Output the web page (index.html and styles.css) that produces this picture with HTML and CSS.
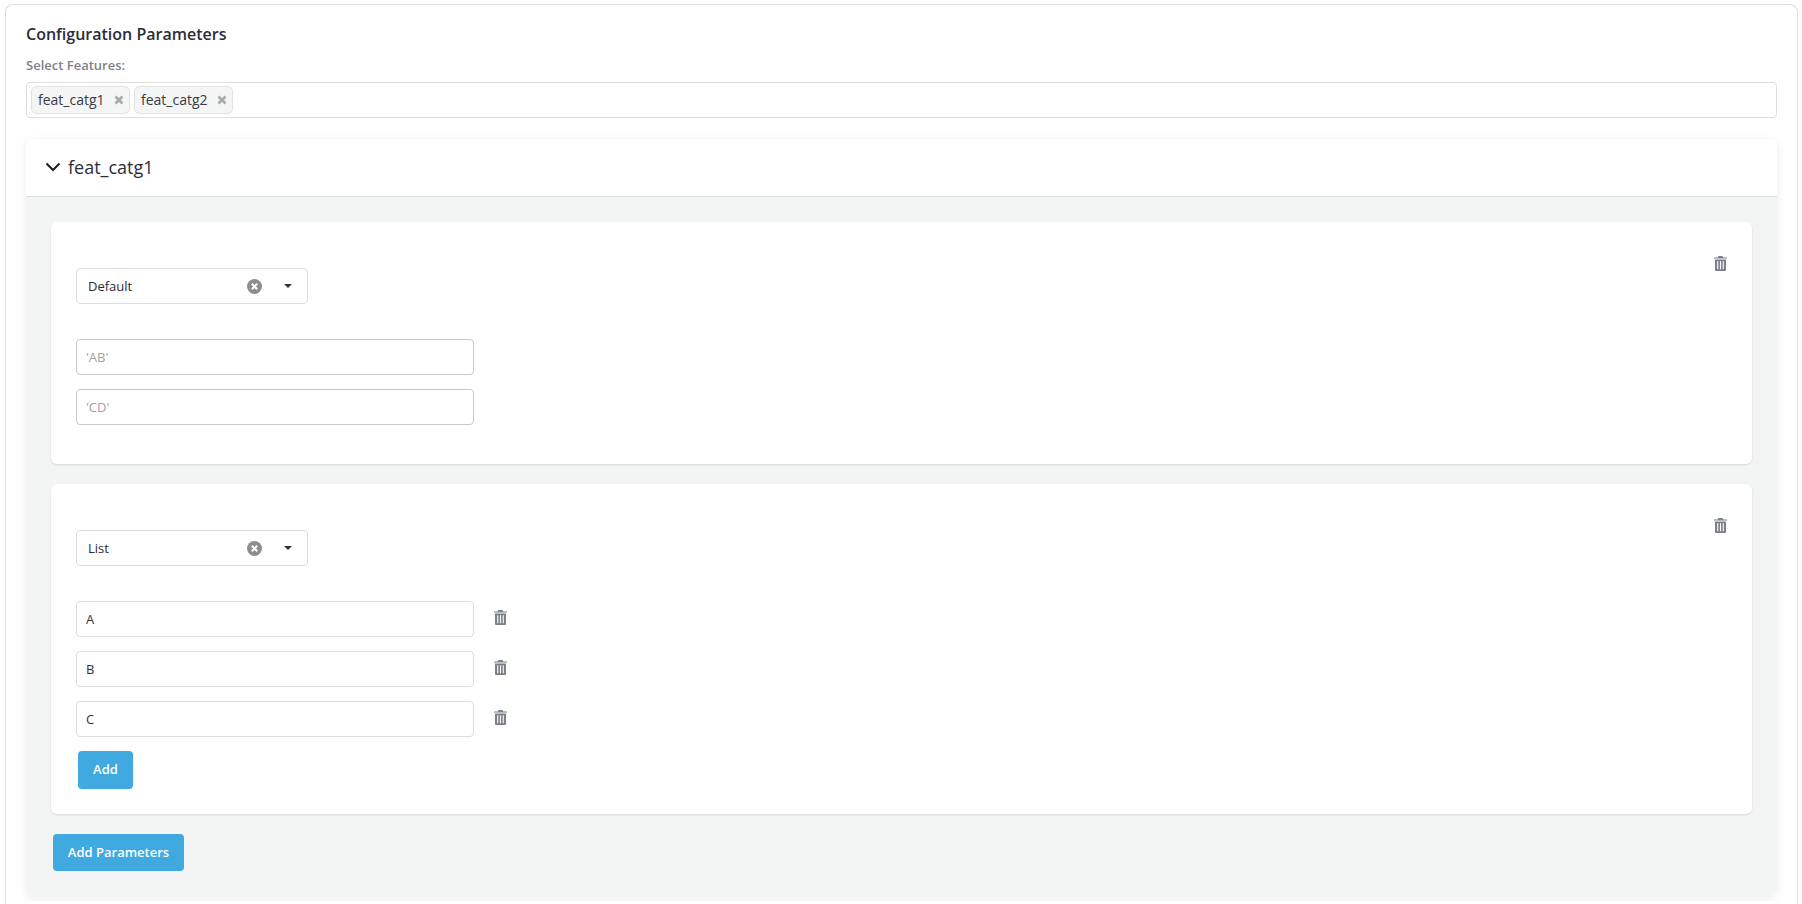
FILE: index.html
```html
<!DOCTYPE html>
<html lang="en">
<head>
    <meta charset="UTF-8">
    <meta name="viewport" content="width=device-width, initial-scale=1.0">
    <title>Configuration Parameters</title>
    <link rel="stylesheet" href="styles.css">
</head>
<body>
    <svg class="icon-defs" width="0" height="0">
        <symbol id="trash" viewBox="0 0 13 15">
            <path fill="currentColor" fill-rule="evenodd" d="M4.5 0h4l.8 1.4H13v1.2H0V1.4h3.7zM1 3.4h11V14a1 1 0 0 1-1 1H2a1 1 0 0 1-1-1zM3.2 5.2v8h1.1v-8zM5.95 5.2v8h1.1v-8zM8.7 5.2v8h1.1v-8z"/>
        </symbol>
        <symbol id="chip-x" viewBox="0 0 10 10">
            <path d="M1.5 1.5l7 7M8.5 1.5l-7 7" fill="none" stroke="currentColor" stroke-width="2.6"/>
        </symbol>
    </svg>
    <div class="page-card">
        <h2 class="page-title">Configuration Parameters</h2>
        <label class="field-label">Select Features:</label>
        <div class="multi-select">
            <span class="chip">feat_catg1 <svg class="chip-x" width="10" height="10"><use href="#chip-x"/></svg></span>
            <span class="chip">feat_catg2 <svg class="chip-x" width="10" height="10"><use href="#chip-x"/></svg></span>
        </div>

        <div class="accordion">
            <div class="accordion-head">
                <svg class="chevron" viewBox="0 0 16 10" width="16" height="10"><path d="M1.5 1.5 8 8l6.5-6.5" fill="none" stroke="currentColor" stroke-width="2"/></svg>
                <span>feat_catg1</span>
            </div>
            <div class="accordion-body">
                <div class="param-card">
                    <button class="icon-btn card-trash" type="button"><svg width="13" height="15"><use href="#trash"/></svg></button>
                    <div class="type-select">
                        <span class="type-value">Default</span>
                        <svg class="clear-icon" viewBox="0 0 15 15" width="15" height="15"><circle cx="7.5" cy="7.5" r="7.5" fill="#8e8e8e"/><path d="M4.8 4.8l5.4 5.4M10.2 4.8l-5.4 5.4" stroke="#fff" stroke-width="2"/></svg>
                        <span class="caret"></span>
                    </div>
                    <div class="value-list">
                        <div class="value-row"><input class="value-input" type="text" placeholder="'AB'"></div>
                        <div class="value-row"><input class="value-input" type="text" placeholder="'CD'"></div>
                    </div>
                </div>

                <div class="param-card">
                    <button class="icon-btn card-trash" type="button"><svg width="13" height="15"><use href="#trash"/></svg></button>
                    <div class="type-select">
                        <span class="type-value">List</span>
                        <svg class="clear-icon" viewBox="0 0 15 15" width="15" height="15"><circle cx="7.5" cy="7.5" r="7.5" fill="#8e8e8e"/><path d="M4.8 4.8l5.4 5.4M10.2 4.8l-5.4 5.4" stroke="#fff" stroke-width="2"/></svg>
                        <span class="caret"></span>
                    </div>
                    <div class="value-list">
                        <div class="value-row">
                            <input class="value-input filled" type="text" value="A">
                            <button class="icon-btn" type="button"><svg width="13" height="15"><use href="#trash"/></svg></button>
                        </div>
                        <div class="value-row">
                            <input class="value-input filled" type="text" value="B">
                            <button class="icon-btn" type="button"><svg width="13" height="15"><use href="#trash"/></svg></button>
                        </div>
                        <div class="value-row">
                            <input class="value-input filled" type="text" value="C">
                            <button class="icon-btn" type="button"><svg width="13" height="15"><use href="#trash"/></svg></button>
                        </div>
                    </div>
                    <button class="button add-btn" type="button">Add</button>
                </div>

                <button class="button add-params" type="button">Add Parameters</button>
            </div>
        </div>

        <div class="accordion next-accordion">
            <div class="accordion-head"></div>
        </div>
    </div>
</body>
</html>
```

FILE: styles.css
```css
html, body {
    height: 904px;
    overflow: hidden;
}

body {
    margin: 0;
    background-color: #fff;
    font-family: "Open Sans", sans-serif;
    color: #2b2b33;
}

.icon-defs {
    position: absolute;
}

.page-card {
    height: 900px;
    box-sizing: border-box;
    margin: 4px 4px 0 5px;
    padding: 17px 20px 0 20px;
    border: 1px solid #ddd;
    border-bottom: none;
    border-radius: 8px 8px 0 0;
    overflow: hidden;
}

.page-title {
    margin: 0;
    font-size: 16px;
    font-weight: 600;
    line-height: 24px;
    color: #2b2d3b;
}

.field-label {
    display: block;
    margin-top: 10px;
    font-size: 13px;
    font-weight: 600;
    line-height: 18px;
    color: #7f8287;
}

.multi-select {
    display: flex;
    align-items: center;
    gap: 4px;
    margin-top: 8px;
    height: 36px;
    box-sizing: border-box;
    padding: 0 4px;
    border: 1px solid #ddd;
    border-radius: 4px;
}

.chip {
    display: flex;
    align-items: center;
    justify-content: space-between;
    width: 99px;
    height: 28px;
    box-sizing: border-box;
    padding: 0 5px 1px 6px;
    background-color: #f4f5f5;
    border: 1px solid #e2e2e2;
    border-radius: 5px;
    font-size: 14px;
    color: #3a3a44;
}

.chip-x {
    color: #a9a9a9;
}

.accordion {
    margin-top: 21px;
    border-radius: 6px;
    box-shadow: 0 2px 10px rgba(0, 0, 0, 0.08);
}

.next-accordion {
    margin-top: 6px;
}

.next-accordion .accordion-head {
    height: 3px;
    padding: 0;
    border-bottom: none;
}

.accordion-head {
    display: flex;
    align-items: center;
    gap: 7px;
    height: 58px;
    box-sizing: border-box;
    padding: 0 0 2px 19px;
    background-color: #fff;
    border-bottom: 1px solid #dcdfdf;
    border-radius: 6px 6px 0 0;
    font-size: 18px;
    color: #2b2d3b;
}

.chevron {
    color: #1c1c22;
}

.accordion-body {
    padding: 25px 25px 24px 25px;
    background-color: #f3f5f5;
    border-radius: 0 0 6px 6px;
}

.param-card {
    position: relative;
    padding: 46px 25px 25px 25px;
    margin-bottom: 20px;
    background-color: #fff;
    border-radius: 6px;
    box-shadow: 0 1px 2px rgba(0, 0, 0, 0.12);
}

.card-trash {
    position: absolute;
    top: 34px;
    right: 25px;
}

.icon-btn {
    display: block;
    padding: 0;
    width: 13px;
    height: 15px;
    border: none;
    background: none;
    color: #7b8086;
}

.type-select {
    display: flex;
    align-items: center;
    width: 232px;
    height: 36px;
    box-sizing: border-box;
    padding: 0 15px 0 11px;
    border: 1px solid #ddd;
    border-radius: 4px;
    font-size: 13px;
}

.type-value {
    flex: 1;
}

.clear-icon {
    margin-right: 22px;
}

.caret {
    width: 0;
    height: 0;
    border-left: 4px solid transparent;
    border-right: 4px solid transparent;
    border-top: 4px solid #333;
}

.value-list {
    display: flex;
    flex-direction: column;
    gap: 14px;
    margin: 35px 0 14px;
}

.value-row {
    display: flex;
    align-items: center;
    gap: 20px;
}

.value-row .icon-btn {
    margin-bottom: 3px;
}

.value-input {
    width: 398px;
    height: 36px;
    box-sizing: border-box;
    padding: 0 9px;
    border: 1px solid #c9c9c9;
    border-radius: 4px;
    font-family: "Open Sans", sans-serif;
    font-size: 13px;
    color: #33333b;
}

.value-input.filled {
    border-color: #ddd;
}

.value-input::placeholder {
    color: #a2a2a2;
    opacity: 1;
}

.button {
    display: block;
    padding: 0 0 2px;
    border: none;
    border-radius: 4px;
    background-color: #3fa9e0;
    color: #fff;
    font-family: "Open Sans", sans-serif;
    font-size: 13px;
    font-weight: 600;
}

.add-btn {
    width: 55px;
    height: 38px;
    margin-left: 2px;
}

.add-params {
    width: 131px;
    height: 37px;
    margin-left: 2px;
}
```
